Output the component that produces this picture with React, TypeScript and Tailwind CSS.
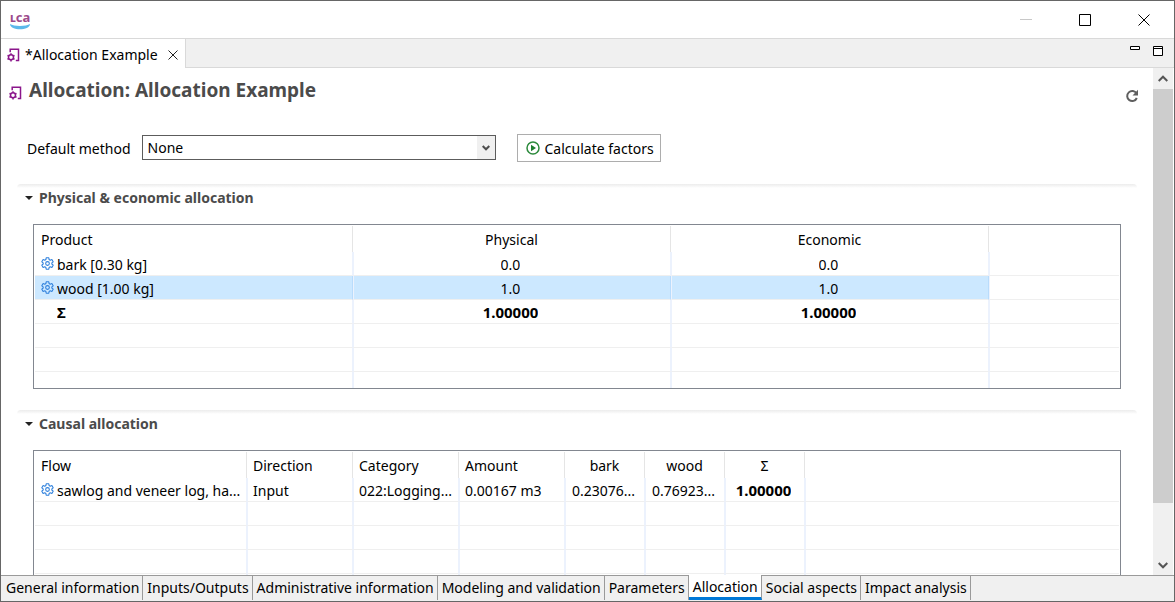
import React from "react";

const GRID = "border-[#ecf2fd]";

function AllocationIcon() {
  return (
    <svg width="14" height="14" viewBox="0 0 14 14" fill="none" stroke="#8b168b" className="shrink-0" aria-hidden="true">
      <path d="M4.2 4.300V1.200h8.300v11.300H9.800" strokeWidth="1.5" />
      <circle cx="5" cy="9.300" r="2.500" strokeWidth="1.5" />
      <path d="M5 5.300v1.500M5 11.800v1.600M1.500 7.300l1.300.8M8.500 11.300l-1.300-.8M1.500 11.300l1.300-.8M8.500 7.300l-1.300.8" strokeWidth="1.5" />
    </svg>
  );
}

function GearIcon() {
  return (
    <svg width="13" height="13" viewBox="0 0 24 24" fill="none" stroke="#2f80dc" strokeWidth="2" strokeLinejoin="round" className="shrink-0" aria-hidden="true">
      <path d="M9.600 1.500h4.800l.6 3.200 2 1.200 3.100-1.100 2.400 4.100-2.500 2.100v1.900l2.500 2.200-2.400 4.100-3.100-1.100-2 1.200-.6 3.200H9.600l-.6-3.200-2-1.200-3.100 1.100-2.400-4.100L4 12.900V11L1.500 8.900l2.400-4.100L7 5.900l2-1.200z" />
      <circle cx="12" cy="12" r="3.400" />
    </svg>
  );
}

function Section({ title, children }: { title: string; children: React.ReactNode }) {
  return (
    <section>
      <div className="ml-4 h-1 rounded-t bg-linear-to-b from-[#ececec] to-white" />
      <h2 className="mb-4 ml-4 flex h-5 items-center">
        <button type="button" className="flex items-center gap-1.5 pl-2 text-[14px] leading-5 font-bold text-[#4b4b4b]">
          <svg width="8" height="4" viewBox="0 0 8 4" fill="#222" aria-hidden="true">
            <path d="M0 0h8L4 4z" />
          </svg>
          {title}
        </button>
      </h2>
      <div className="mr-4 ml-8">{children}</div>
    </section>
  );
}

type Column = { label: string; width: string; center?: boolean };
type Row = { cells: string[]; icon?: boolean; selected?: boolean; bold?: boolean; boldLast?: boolean };

function Grid({ label, columns, rows, blank }: { label: string; columns: Column[]; rows: Row[]; blank: number }) {
  const all: Row[] = [...rows, ...Array.from({ length: blank }, () => ({ cells: columns.map(() => "") }))];
  return (
    <table aria-label={label} className="w-full table-fixed border-separate border-spacing-0">
      <colgroup>
        {columns.map((c) => (
          <col key={c.label} className={c.width} />
        ))}
        <col />
      </colgroup>
      <thead>
        <tr className="h-[26px]">
          {columns.map((c) => (
            <th key={c.label} scope="col" className={`border-r border-[#e5e5e5] px-1.5 pt-0.5 pb-0 font-normal ${c.center ? "text-center" : "text-left"}`}>
              {c.label}
            </th>
          ))}
          <td />
        </tr>
      </thead>
      <tbody>
        {all.map((r, i) => (
          <tr key={i} className="h-6">
            {r.cells.map((cell, j) => {
              const bold = r.bold || (r.boldLast && j === r.cells.length - 1);
              return (
                <td
                  key={j}
                  className={`h-6 border-r border-b ${j > 0 ? "border-l" : ""} ${GRID} border-b-[#efefef] p-0 ${r.selected ? "border-r-[#b9dcfc] bg-[#cce8ff]" : ""}`}
                >
                  <div
                    className={`flex h-[23px] items-center gap-[3px] ${j === 0 ? "pr-1 pl-1.5" : columns[j].center ? "justify-center pr-2 pl-[5px]" : "pr-1 pl-[5px]"}`}
                  >
                    {r.icon && j === 0 && <GearIcon />}
                    {r.bold && j === 0 && <span className="w-[13px]" />}
                    <span className={`truncate ${bold ? "text-[15px] font-bold" : "pt-0.5"}`}>{cell}</span>
                  </div>
                </td>
              );
            })}
            <td className={`border-b border-l ${GRID} border-b-[#efefef] p-0`} />
          </tr>
        ))}
      </tbody>
    </table>
  );
}

const productColumns: Column[] = [
  { label: "Product", width: "w-[318px]" },
  { label: "Physical", width: "w-[318px]", center: true },
  { label: "Economic", width: "w-[318px]", center: true },
];
const productRows: Row[] = [
  { cells: ["bark [0.30 kg]", "0.0", "0.0"], icon: true },
  { cells: ["wood [1.00 kg]", "1.0", "1.0"], icon: true, selected: true },
  { cells: ["Σ", "1.00000", "1.00000"], bold: true },
];
const causalColumns: Column[] = [
  { label: "Flow", width: "w-[212px]" },
  { label: "Direction", width: "w-[106px]" },
  { label: "Category", width: "w-[106px]" },
  { label: "Amount", width: "w-[106px]" },
  { label: "bark", width: "w-[80px]", center: true },
  { label: "wood", width: "w-[80px]", center: true },
  { label: "Σ", width: "w-[80px]", center: true },
];
const causalRows: Row[] = [
  {
    cells: ["sawlog and veneer log, ha...", "Input", "022:Logging...", "0.00167 m3", "0.23076...", "0.76923...", "1.00000"],
    icon: true,
    boldLast: true,
  },
];
const pages = [
  "General information",
  "Inputs/Outputs",
  "Administrative information",
  "Modeling and validation",
  "Parameters",
  "Allocation",
  "Social aspects",
  "Impact analysis",
];

export default function App() {
  return (
    <div className="flex h-screen flex-col overflow-hidden border border-[#666] bg-white font-['Noto_Sans',sans-serif] text-[14px] leading-5 text-black">
      <header className="flex h-[37px] shrink-0 items-center justify-between pr-6 pl-2">
        <div role="img" aria-label="openLCA" className="flex w-[22px] flex-col items-center">
          <span className="text-[13px] leading-[14px] font-bold text-[#9b4a8c]">ʟca</span>
          <svg width="20" height="6" viewBox="0 0 20 6" aria-hidden="true">
            <path d="M0 0c4 2.600 16 2.600 20 0 0 7-20 7-20 0z" fill="#5bb8ea" />
          </svg>
        </div>
        <div className="flex items-center gap-[47px]">
          <button type="button" aria-label="Minimize">
            <svg width="12" height="12" stroke="#c8c8c8" aria-hidden="true"><path d="M0 5.500h12" /></svg>
          </button>
          <button type="button" aria-label="Maximize">
            <svg width="12" height="12" fill="none" stroke="#000" aria-hidden="true"><path d="M.5.500h11v11H.5z" /></svg>
          </button>
          <button type="button" aria-label="Close">
            <svg width="12" height="12" stroke="#000" aria-hidden="true"><path d="M.5.500l11 11M11.500.500l-11 11" /></svg>
          </button>
        </div>
      </header>

      <div className="flex h-[30px] shrink-0 items-stretch border-t border-[#d9d9d9] bg-[#f0f0f0]">
        <div className="flex items-center gap-[5px] border-r border-[#d9d9d9] bg-white pt-0.5 pr-[7px] pl-[5px]">
          <AllocationIcon />
          <span>*Allocation Example</span>
          <button type="button" aria-label="Close tab" className="ml-[5px]">
            <svg width="10" height="10" stroke="#222" aria-hidden="true"><path d="M.5.500l9 9M9.500.500l-9 9" /></svg>
          </button>
        </div>
        <div className="flex flex-1 items-start justify-end gap-[13px] border-b border-[#d9d9d9] pt-[7px] pr-[11px]">
          <button type="button" aria-label="Minimize view">
            <svg width="10" height="11" fill="#fff" stroke="#000" aria-hidden="true"><path d="M.5.500h9v3H.5z" /></svg>
          </button>
          <button type="button" aria-label="Maximize view">
            <svg width="10" height="11" fill="#fff" stroke="#000" aria-hidden="true"><path d="M.5.500h9v9H.5zM.5 2.500h9" /></svg>
          </button>
        </div>
      </div>

      <div className="flex min-h-0 flex-1">
        <main className="min-w-0 flex-1 overflow-hidden pr-4">
          <div className="flex h-[38px] items-end justify-between pl-[7px]">
            <h1 className="flex items-end gap-[7px] pb-1 text-[19px] leading-6 font-bold text-[#4b4b4b]">
              <span className="pb-0.5"><AllocationIcon /></span>
              Allocation: Allocation Example
            </h1>
            <button type="button" aria-label="Reload" className="-mr-0.5 pb-[3px]">
              <svg width="14" height="14" viewBox="0 0 14 14" aria-hidden="true">
                <path d="M11.500 4.500A5 5 0 1 0 11.800 9" fill="none" stroke="#5f5f5f" strokeWidth="2" />
                <path d="M13 .8v5.700H7.500z" fill="#5f5f5f" />
              </svg>
            </button>
          </div>

          <div className="mt-7 mb-[22px] flex items-center pl-[26px]">
            <label htmlFor="method" className="mr-[11px] pt-0.5">Default method</label>
            <div className="relative mb-px w-[354px]">
              <select id="method" defaultValue="None" className="block h-[25px] w-full appearance-none border border-[#5c5c5c] bg-white pl-[5px] outline-none">
                <option>None</option>
              </select>
              <span className="pointer-events-none absolute inset-y-px right-px flex w-[18px] items-center justify-center bg-[#f0f0f0]">
                <svg width="8" height="6" fill="none" stroke="#4d4d4d" strokeWidth="2" aria-hidden="true"><path d="M.7 1L4 4.300 7.300 1" /></svg>
              </span>
            </div>
            <button type="button" className="ml-[21px] flex h-7 items-center gap-[5px] border border-[#adadad] bg-white pr-1.5 pl-2">
              <svg width="14" height="14" viewBox="0 0 14 14" aria-hidden="true">
                <circle cx="7" cy="7" r="6" fill="#fff" stroke="#2c8a3c" strokeWidth="1.500" />
                <path d="M5 3.800v6.400L10 7z" fill="#1f8030" />
              </svg>
              <span className="pt-0.5">Calculate factors</span>
            </button>
          </div>

          <Section title="Physical & economic allocation">
            <div className="h-[165px] overflow-hidden border border-[#828790] p-px">
              <Grid label="Physical & economic allocation" columns={productColumns} rows={productRows} blank={3} />
            </div>
          </Section>
          <div className="h-[21px]" />
          <Section title="Causal allocation">
            <div className="h-[165px] overflow-hidden border border-[#828790] p-px">
              <Grid label="Causal allocation" columns={causalColumns} rows={causalRows} blank={5} />
            </div>
          </Section>
        </main>

        <div className="mr-px flex w-5 shrink-0 flex-col bg-[#f0f0f0]">
          <button type="button" aria-label="Scroll up" className="flex h-[21px] items-center justify-center">
            <svg width="10" height="8" fill="none" stroke="#555" strokeWidth="2" aria-hidden="true"><path d="M.7 6L5 1.700 9.300 6" /></svg>
          </button>
          <div className="flex-1">
            <div className="h-[89%] bg-[#cdcdcd]" />
          </div>
          <button type="button" aria-label="Scroll down" className="flex h-[21px] items-center justify-center">
            <svg width="10" height="8" fill="none" stroke="#555" strokeWidth="2" aria-hidden="true"><path d="M.7 2L5 6.300 9.300 2" /></svg>
          </button>
        </div>
      </div>

      <nav aria-label="Editor pages" className="flex h-[26px] shrink-0 bg-[#f0f0f0] pb-px">
        <div className="w-px border-t border-[#9a9a9a]" />
        {pages.map((p) => (
          <button
            key={p}
            type="button"
            aria-current={p === "Allocation" ? "page" : undefined}
            className={`border-r border-[#9a9a9a] pr-[3px] pl-1 whitespace-nowrap ${p === "Allocation" ? "border-b-[3px] border-b-[#0078d7] bg-white pt-0.5" : "border-t"}`}
          >
            {p}
          </button>
        ))}
        <div className="flex-1 border-t border-[#9a9a9a]" />
      </nav>
    </div>
  );
}
